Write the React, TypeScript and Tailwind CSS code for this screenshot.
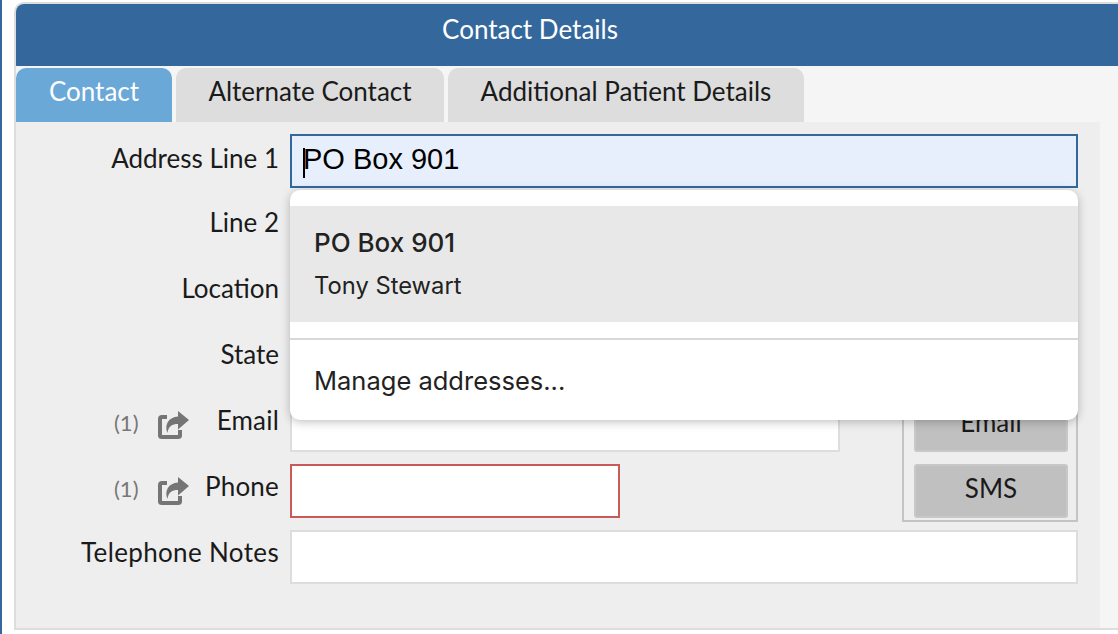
const labelFont = "font-['Lato','Liberation_Sans',sans-serif]"

function Label({ children, className = 'leading-[44px]' }: { children: React.ReactNode; className?: string }) {
  return <span className={`text-[26px] text-[#1a1a1a] ${className}`}>{children}</span>
}

function Field({ className = '' }: { className?: string }) {
  return <div className={`h-[54px] border-2 border-[#dddddd] bg-white ${className}`} />
}

function ShareIcon() {
  return (
    <svg viewBox="0 0 32 28" className="h-[28px] w-[32px] shrink-0" fill="#757575">
      <path d="M9 6H4Q2 6 2 8V24.500Q2 26 4 26H20Q22 26 22 24.500V19" fill="none" stroke="#757575" strokeWidth="4" />
      <path d="M20 0L31 9L20 18.5V13C14 13 10.500 15 9.500 22C6 14 10.500 6 20 5.500Z" />
    </svg>
  )
}

function ContactLabel({ text }: { text: string }) {
  return (
    <div className="flex items-start pl-[98px]">
      <span className="w-[44px] text-[22px] leading-[50px] text-[#777777]">(1)</span>
      <div className="mt-[13px]"><ShareIcon /></div>
      <div className="ml-auto"><Label className="leading-[44px] tracking-[0.2px]">{text}</Label></div>
    </div>
  )
}

export default function App() {
  return (
    <div className={`h-[634px] w-[1118px] overflow-hidden border-l-2 border-[#34689c] bg-white pt-[2px] pl-[12px] ${labelFont}`}>
      <div className="h-[628px] w-[1120px] overflow-hidden rounded-tl-[10px] border-2 border-[#dddddd] bg-[#f5f5f5]">
        <div className="h-[62px] bg-[#34689c] pr-[88px] text-center text-[26px] leading-[50px] text-white">Contact Details</div>
        <div className="mt-[2px] flex h-[54px] gap-[4px]">
          <div className="w-[156px] rounded-t-[10px] bg-[#6aa8d8] text-center text-[26px] leading-[46px] text-white">Contact</div>
          <div className="w-[268px] rounded-t-[10px] bg-[#dddddd] text-center text-[26px] leading-[46px] text-[#1a1a1a]">Alternate Contact</div>
          <div className="w-[356px] rounded-t-[10px] bg-[#dddddd] text-center text-[26px] leading-[46px] text-[#1a1a1a]">Additional Patient Details</div>
        </div>
        <div className="relative h-[506px] w-[1084px] bg-[#eeeeee] pt-[12px]">
          <div className="grid grid-cols-[263px_1fr] gap-x-[11px] gap-y-[12px] pr-[22px]">
            <div className="text-right"><Label className="leading-[48px]">Address Line 1</Label></div>
            <div className="flex h-[54px] items-center border-2 border-[#34689c] bg-[#e8effc] pb-[3px] pl-[11px] font-['Liberation_Sans',sans-serif] text-[29px] text-black">
              <span className="mt-[6px] mr-[-2px] h-[30px] w-[2px] bg-black" />
              PO Box 901
            </div>

            <div className="text-right"><Label>Line 2</Label></div>
            <Field />
            <div className="text-right"><Label>Location</Label></div>
            <Field />
            <div className="text-right"><Label>State</Label></div>
            <Field />

            <ContactLabel text="Email" />
            <div className="row-span-2 flex justify-between">
              <div className="flex flex-col gap-[12px]">
                <Field className="w-[550px]" />
                <div className="h-[54px] w-[330px] border-2 border-[#c85a57] bg-white" />
              </div>
              <div className="-mt-[12px] -mb-[4px] flex h-[136px] w-[176px] flex-col gap-[12px] border-2 border-[#c4c4c4] pt-[10px] pb-[2px] pl-[10px]">
                <div className="h-[54px] w-[154px] shrink-0 rounded-[3px] border-2 border-[#c8c8c8] bg-[#c0c0c0] text-center text-[26px] leading-[44px] text-[#1a1a1a]">Email</div>
                <div className="h-[54px] w-[154px] shrink-0 rounded-[3px] border-2 border-[#c8c8c8] bg-[#c0c0c0] text-center text-[26px] leading-[44px] text-[#1a1a1a]">SMS</div>
              </div>
            </div>
            <ContactLabel text="Phone" />

            <div className="text-right"><Label className="leading-[44px] tracking-[0.35px]">Telephone Notes</Label></div>
            <Field />
          </div>

          {/* address suggestions */}
          <div className="absolute top-[68px] left-[274px] h-[230px] w-[788px] rounded-[10px] bg-white py-[16px] font-['Inter',sans-serif] text-[#222222] shadow-[0_2px_10px_rgba(0,0,0,0.25)]">
            <div className="h-[116px] bg-[#e8e8e8] pt-[21px] pl-[24px]">
              <div className="text-[26px] leading-[32px] font-medium">PO Box 901</div>
              <div className="mt-[11px] text-[23.750px] leading-[32px]">Tony Stewart</div>
            </div>
            <div className="mt-[16px] border-t-2 border-[#d8d8d8] pt-[25px] pl-[24px] text-[25.5px] leading-[32px]">Manage addresses...</div>
          </div>
        </div>
      </div>
    </div>
  )
}
